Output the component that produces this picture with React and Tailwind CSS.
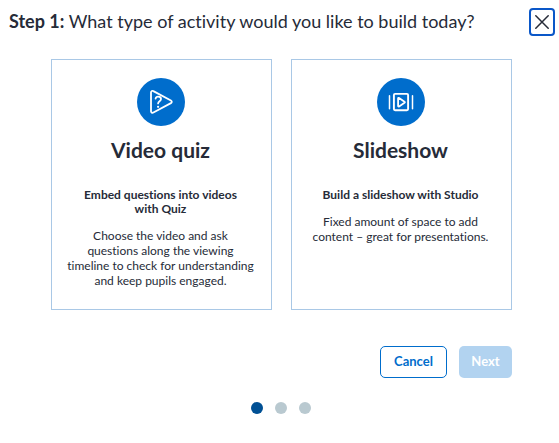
import {useState} from "react";

const activities = [
    {
        id: "quiz",
        title: "Video quiz",
        summary: ["Embed questions into videos", "with Quiz"],
        details: ["Choose the video and ask", "questions along the viewing", "timeline to check for understanding", "and keep pupils engaged."],
        icon: QuizIcon
    },
    {
        id: "slideshow",
        title: "Slideshow",
        summary: ["Build a slideshow with Studio"],
        details: ["Fixed amount of space to add", "content – great for presentations."],
        icon: SlideshowIcon
    }
];

function QuizIcon() {
    return <svg className="size-12" viewBox="0 0 48 48" fill="none" stroke="white" strokeLinecap="round"
                strokeLinejoin="round" aria-hidden="true">
        <circle cx="24" cy="24" r="24" fill="#006dcc" stroke="none"/>
        <path d="M14 14.4v18.8c0 1.4 1.3 2 2.4 1.3l17.5-9.4c1.2-.7 1.2-1.9 0-2.6L16.4 13.1c-1.1-.7-2.4-.1-2.4 1.3z"
              strokeWidth="1.8"/>
        <path d="M18.6 20.6c.3-1.4 1.3-1.9 2.5-1.9 1.7 0 2.9.9 2.9 2.4 0 2.2-2.9 2-2.9 4.3" strokeWidth="1.8"/>
        <circle cx="21.1" cy="28.8" r="1.1" fill="white" stroke="none"/>
    </svg>
}

function SlideshowIcon() {
    return <svg className="size-12" viewBox="0 0 48 48" fill="none" stroke="white" strokeLinecap="round"
                strokeLinejoin="round" aria-hidden="true">
        <circle cx="24" cy="24" r="24" fill="#006dcc" stroke="none"/>
        <rect x="16.9" y="15.9" width="14.2" height="16.4" rx="1.2" strokeWidth="1.9"/>
        <path d="M21.1 20.5v7.4c0 .6.5.8 1 .5l5.4-3.6c.5-.3.5-.8 0-1.1l-5.4-3.7c-.5-.3-1-.1-1 .5z" strokeWidth="1.8"/>
        <path d="M12.5 17.8v13M35.5 17.8v13" strokeWidth="1.5"/>
    </svg>
}

function Lines({lines}) {
    return lines.map(line => <span key={line} className="block">{line}</span>)
}

function ActivityCard({activity, selected, onSelect}) {
    const Icon = activity.icon

    return <button type="button" aria-pressed={selected} onClick={() => onSelect(activity.id)}
                   className="flex flex-col items-center border border-[#a9c8e6] bg-white pt-[18px] pr-0.5 pb-[21px] text-center">
        <Icon/>
        <span className="mt-2.5 text-[21px] leading-7 font-bold">{activity.title}</span>
        <span className="mt-6 text-xs leading-[14px] font-bold"><Lines lines={activity.summary}/></span>
        <span className="mt-3 text-xs leading-[15px]"><Lines lines={activity.details}/></span>
    </button>
}

export default function App() {
    const [selected, setSelected] = useState("");

    return <main className="bg-white pt-2 font-['Lato',sans-serif] text-[#262b38] [font-variant-ligatures:none]">
        <header className="flex items-start justify-between pr-1 pl-[9px]">
            <h1 className="text-lg leading-[26px]"><strong>Step 1:</strong> What type of activity would you like to
                build today?</h1>
            <button type="button" aria-label="Close"
                    className="flex h-7 w-[26px] items-center justify-center rounded border-2 border-[#0a57c8]">
                <svg className="size-3.5" viewBox="0 0 14 14" stroke="currentColor" strokeWidth="1.5"
                     strokeLinecap="round" aria-hidden="true">
                    <path d="M.8.8l12.4 12.4M13.2.8L.8 13.2"/>
                </svg>
            </button>
        </header>
        <div className="pr-[47px] pl-[51px]">
            <div className="mt-[23px] grid grid-cols-2 gap-[19px]">
                {activities.map(activity => <ActivityCard key={activity.id} activity={activity}
                                                          selected={selected === activity.id}
                                                          onSelect={setSelected}/>)}
            </div>
            <div className="mt-9 flex justify-end gap-3 text-[13px] font-bold">
                <button type="button" className="h-8 w-[67px] rounded-[5px] border border-[#006dcc] text-[#006dcc]">
                    Cancel
                </button>
                <button type="button" disabled={!selected}
                        className="h-8 w-[53px] rounded-[5px] bg-[#006dcc] text-white disabled:bg-[#b2d3f0]">
                    Next
                </button>
            </div>
        </div>
        <div className="mt-6 flex justify-center gap-3 pl-0.5">
            <span className="size-3 rounded-full bg-[#005094]"/>
            <span className="size-3 rounded-full bg-[#b9c9d0]"/>
            <span className="size-3 rounded-full bg-[#b9c9d0]"/>
        </div>
    </main>
}
